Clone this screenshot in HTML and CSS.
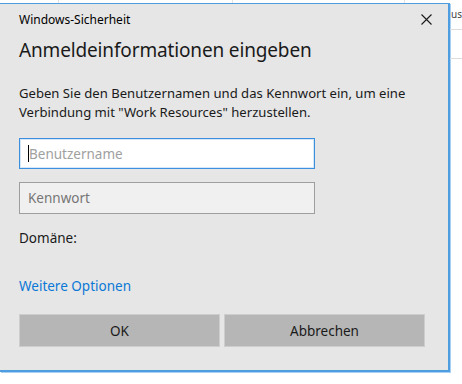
FILE: index.html
```html
<!DOCTYPE html>
<html>
    <head>
        <link rel="stylesheet" href="styles.css">
    </head>
    <body>
        <div class="screen">
            <!-- strip of the window behind the dialog -->
            <div class="top-strip">
                <span class="cell c1"></span>
                <span class="cell c2"></span>
                <span class="cell c3"></span>
                <span class="cell c4"></span>
            </div>
            <div class="main-row">
                <div class="dialog">
                    <div class="title-bar">
                        <span class="title">Windows-Sicherheit</span>
                        <span class="close" title="Schließen">
                            <svg width="11" height="11" viewBox="0 0 11 11">
                                <path d="M0.5 0.5 L10.5 10.5 M10.5 0.5 L0.5 10.5" stroke="#1a1a1a" stroke-width="1.1" fill="none"/>
                            </svg>
                        </span>
                    </div>
                    <h1>Anmeldeinformationen eingeben</h1>
                    <p class="help-text">Geben Sie den Benutzernamen und das Kennwort ein, um eine Verbindung mit "Work Resources" herzustellen.</p>
                    <div class="field focused"><span class="caret"></span><span class="placeholder">Benutzername</span></div>
                    <div class="field"><span class="placeholder">Kennwort</span></div>
                    <div class="domain">Domäne:</div>
                    <a class="more-link" href="#">Weitere Optionen</a>
                    <div class="button-container">
                        <button>OK</button>
                        <button>Abbrechen</button>
                    </div>
                </div>
                <div class="side">
                    <div class="side-text">us</div>
                    <div class="side-line first"></div>
                    <div class="side-line"></div>
                </div>
            </div>
        </div>
    </body>
</html>
```

FILE: styles.css
```css
body {
    margin: 0;
    padding: 0;
    background-color: #fff;
    font-family: "Noto Sans", "Open Sans", sans-serif;
    color: #1a1a1a;
}
.screen {
    width: 462px;
    height: 384px;
    overflow: hidden;
}
.top-strip {
    display: flex;
    height: 3px;
}
.cell {
    border-right: 1px solid #e3e3e3;
}
.c1 { width: 58px; }
.c2 { width: 173px; }
.c3 { width: 171px; }
.c4 { flex: 1; border-right: none; }
.main-row {
    display: flex;
}
.dialog {
    width: 425px;
    padding: 0 23px 23px 0;
    background-color: #e6e6e6;
    border-top: 1px solid #4d9de0;
    border-right: 2px solid #4d9de0;
    border-bottom: 2px solid #4d9de0;
    box-shadow: 1px 1px 0 #a8d0f2;
}
.dialog > * {
    margin-left: 19px;
}
.title-bar {
    display: flex;
    justify-content: space-between;
    align-items: center;
    height: 30px;
    margin-right: -7px;
}
.title {
    font-size: 12px;
    color: #000;
}
.close {
    display: flex;
    width: 11px;
    height: 11px;
    margin-top: 1px;
}
h1 {
    font-size: 19px;
    letter-spacing: -0.15px;
    font-weight: normal;
    line-height: 28px;
    margin-top: 2px;
    margin-bottom: 0;
    color: #1a1a1a;
}
.help-text {
    font-size: 13.1px;
    line-height: 19px;
    margin-top: 20px;
    margin-bottom: 0;
    width: 400px;
}
.field {
    box-sizing: border-box;
    width: 296px;
    height: 32px;
    margin-top: 13px;
    display: flex;
    align-items: center;
    padding-left: 8px;
    background-color: #f0f0f0;
    border: 1px solid #9e9e9e;
    font-size: 13.5px;
}
.field.focused {
    height: 31px;
    margin-top: 16px;
    background-color: #fff;
    border-color: #3c8fdc;
    box-shadow: inset 0 0 0 1px #d6e8f8;
}
.caret {
    width: 1px;
    height: 17px;
    background-color: #000;
}
.placeholder {
    color: #767676;
}
.focused .placeholder {
    color: #a0a0a0;
}
.domain {
    font-size: 13.5px;
    line-height: 20px;
    margin-top: 14px;
}
.more-link {
    display: block;
    font-size: 13.5px;
    line-height: 20px;
    margin-top: 28px;
    color: #0a78d6;
    text-decoration: none;
}
.button-container {
    display: flex;
    gap: 4px;
    margin-top: 18px;
}
button {
    flex: 1;
    height: 33px;
    font-family: inherit;
    font-size: 13.5px;
    color: #1a1a1a;
    background-color: #b6b6b6;
    border: 1px solid #cdcdcd;
    padding: 0;
}
.side {
    flex: 1;
    overflow: hidden;
    padding-top: 4px;
}
.side-text {
    font-size: 10px;
    line-height: 14px;
    color: #444;
    margin-left: 1px;
    white-space: nowrap;
}
.side-line {
    height: 1px;
    background-color: #dcdcdc;
    margin-top: 8px;
}
.side-line + .side-line {
    margin-top: 28px;
}
```
